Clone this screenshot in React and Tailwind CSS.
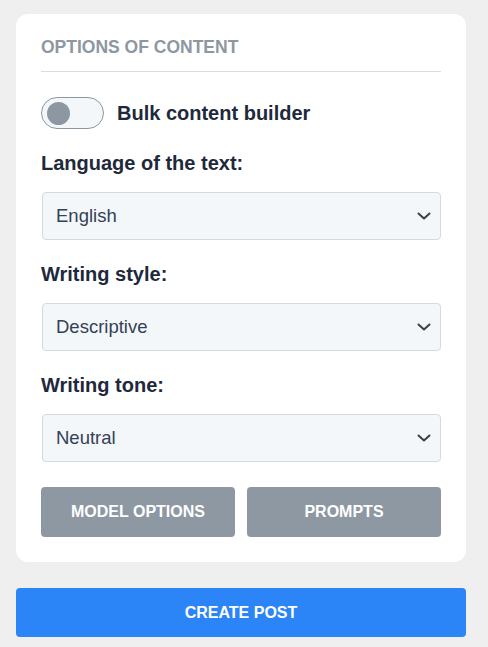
export default function App() {
  const selects = [
    { label: "Language of the text:", value: "English" },
    { label: "Writing style:", value: "Descriptive" },
    { label: "Writing tone:", value: "Neutral" },
  ];

  return (
    <div className="min-h-screen bg-[#efefef] pl-4 pr-[22px] pt-[14px] font-['Liberation_Sans',Arial,sans-serif]">
      <div className="rounded-xl bg-white px-[25px] pb-[25px] pt-[23px]">
        <h3 className="text-[17.5px] font-bold uppercase leading-[20px] text-[#8d97a2]">
          Options of content
        </h3>
        <div className="mt-[14px] h-px bg-[#dcdcdc]" />

        <div className="mt-[25px] flex items-center gap-[13px]">
          <div className="flex h-[32px] w-[63px] items-center rounded-full border border-[#8d97a2] bg-[#f4f7fa] pl-[5px]">
            <div className="h-[23px] w-[23px] rounded-full bg-[#8d97a2]" />
          </div>
          <span className="text-[20px] font-bold leading-[28px] text-[#1e293b]">
            Bulk content builder
          </span>
        </div>

        {selects.map((s) => (
          <div key={s.label} className="mt-[22px]">
            <label className="block text-[20px] font-bold leading-[24px] text-[#1e293b]">
              {s.label}
            </label>
            <div className="ml-px mt-[17px] flex h-[48px] items-center justify-between rounded border border-[#d6d9de] bg-[#f4f7fa] pl-[13px] pr-[9px]">
              <span className="text-[18.5px] text-[#334155]">{s.value}</span>
              <svg
                width="14"
                height="8"
                viewBox="0 0 14 8"
                fill="none"
                stroke="#3a3f47"
                strokeWidth="2"
                strokeLinecap="round"
                strokeLinejoin="round"
              >
                <path d="M1.5 1.5 7 6.5l5.5-5" />
              </svg>
            </div>
          </div>
        ))}

        <div className="mt-[25px] grid grid-cols-2 gap-3">
          <button className="h-[50px] rounded bg-[#8d98a3] text-[16px] font-bold uppercase text-white">
            Model options
          </button>
          <button className="h-[50px] rounded bg-[#8d98a3] text-[16px] font-bold uppercase text-white">
            Prompts
          </button>
        </div>
      </div>

      <button className="mt-[26px] h-[49px] w-full rounded bg-[#2b85f6] text-[16px] font-bold uppercase text-white">
        Create post
      </button>
    </div>
  );
}
